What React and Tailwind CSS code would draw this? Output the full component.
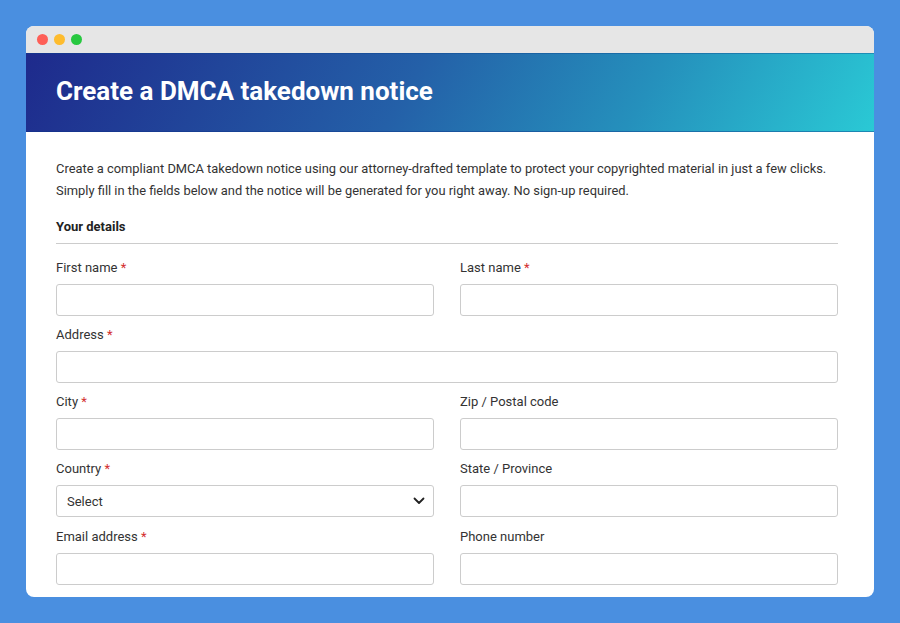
const Label = ({ text, required }) => (
    <div className="text-[13px] leading-[20px] text-[#333] mb-[6px]">
        {text}
        {required && <span className="text-[#d32f2f]"> *</span>}
    </div>
);

const Field = ({ label, required, select }) => (
    <div>
        <Label text={label} required={required} />
        {select ? (
            <div className="h-[32px] border border-[#ccc] rounded-[3px] flex items-center justify-between pl-[10px] pr-[8px] text-[13px] text-[#333]">
                <span>Select</span>
                <svg width="12" height="8" viewBox="0 0 12 8" fill="none">
                    <path d="M1.5 1.5 6 6l4.5-4.5" stroke="#222" strokeWidth="1.8" strokeLinecap="round" strokeLinejoin="round" />
                </svg>
            </div>
        ) : (
            <div className="h-[32px] border border-[#ccc] rounded-[3px] bg-white" />
        )}
    </div>
);

export default function App() {
    return (
        <div className="w-[900px] h-[623px] bg-[#4a8fe0] pt-[26px] px-[26px] font-['Roboto',sans-serif]">
            <div className="w-[848px] h-[571px] bg-white rounded-[8px] overflow-hidden flex flex-col">
                <div className="h-[27px] shrink-0 bg-[#e6e6e6] flex items-center gap-[6px] pl-[11px]">
                    <span className="w-[11px] h-[11px] rounded-full bg-[#fe5f57]" />
                    <span className="w-[11px] h-[11px] rounded-full bg-[#febc2e]" />
                    <span className="w-[11px] h-[11px] rounded-full bg-[#28c840]" />
                </div>
                <div className="h-[79px] shrink-0 border-y border-[#0b3a8a]/40 bg-[linear-gradient(120deg,#1e2a8c_0%,#2460a8_45%,#2590bc_72%,#2ac9d5_100%)] flex items-center pl-[30px] pb-[3px]">
                    <h1 className="text-white font-bold text-[26px] leading-none">Create a DMCA takedown notice</h1>
                </div>
                <div className="px-[30px] pt-[26px]">
                    <p className="text-[12.9px] leading-[22px] text-[#333]">
                        Create a compliant DMCA takedown notice using our attorney-drafted template to protect your copyrighted material in just a few clicks.
                        <br />
                        Simply fill in the fields below and the notice will be generated for you right away. No sign-up required.
                    </p>
                    <div className="mt-[15px] pb-[6px] border-b border-[#ccc] text-[13px] leading-[20px] font-bold text-[#222] w-[782px]">
                        Your details
                    </div>
                    <div className="grid grid-cols-2 gap-x-[26px] gap-y-[9.3px] w-[782px] mt-[13.5px]">
                        <Field label="First name" required />
                        <Field label="Last name" required />
                        <div className="col-span-2">
                            <Field label="Address" required />
                        </div>
                        <Field label="City" required />
                        <Field label="Zip / Postal code" />
                        <Field label="Country" required select />
                        <Field label="State / Province" />
                        <Field label="Email address" required />
                        <Field label="Phone number" />
                    </div>
                </div>
            </div>
        </div>
    );
}
